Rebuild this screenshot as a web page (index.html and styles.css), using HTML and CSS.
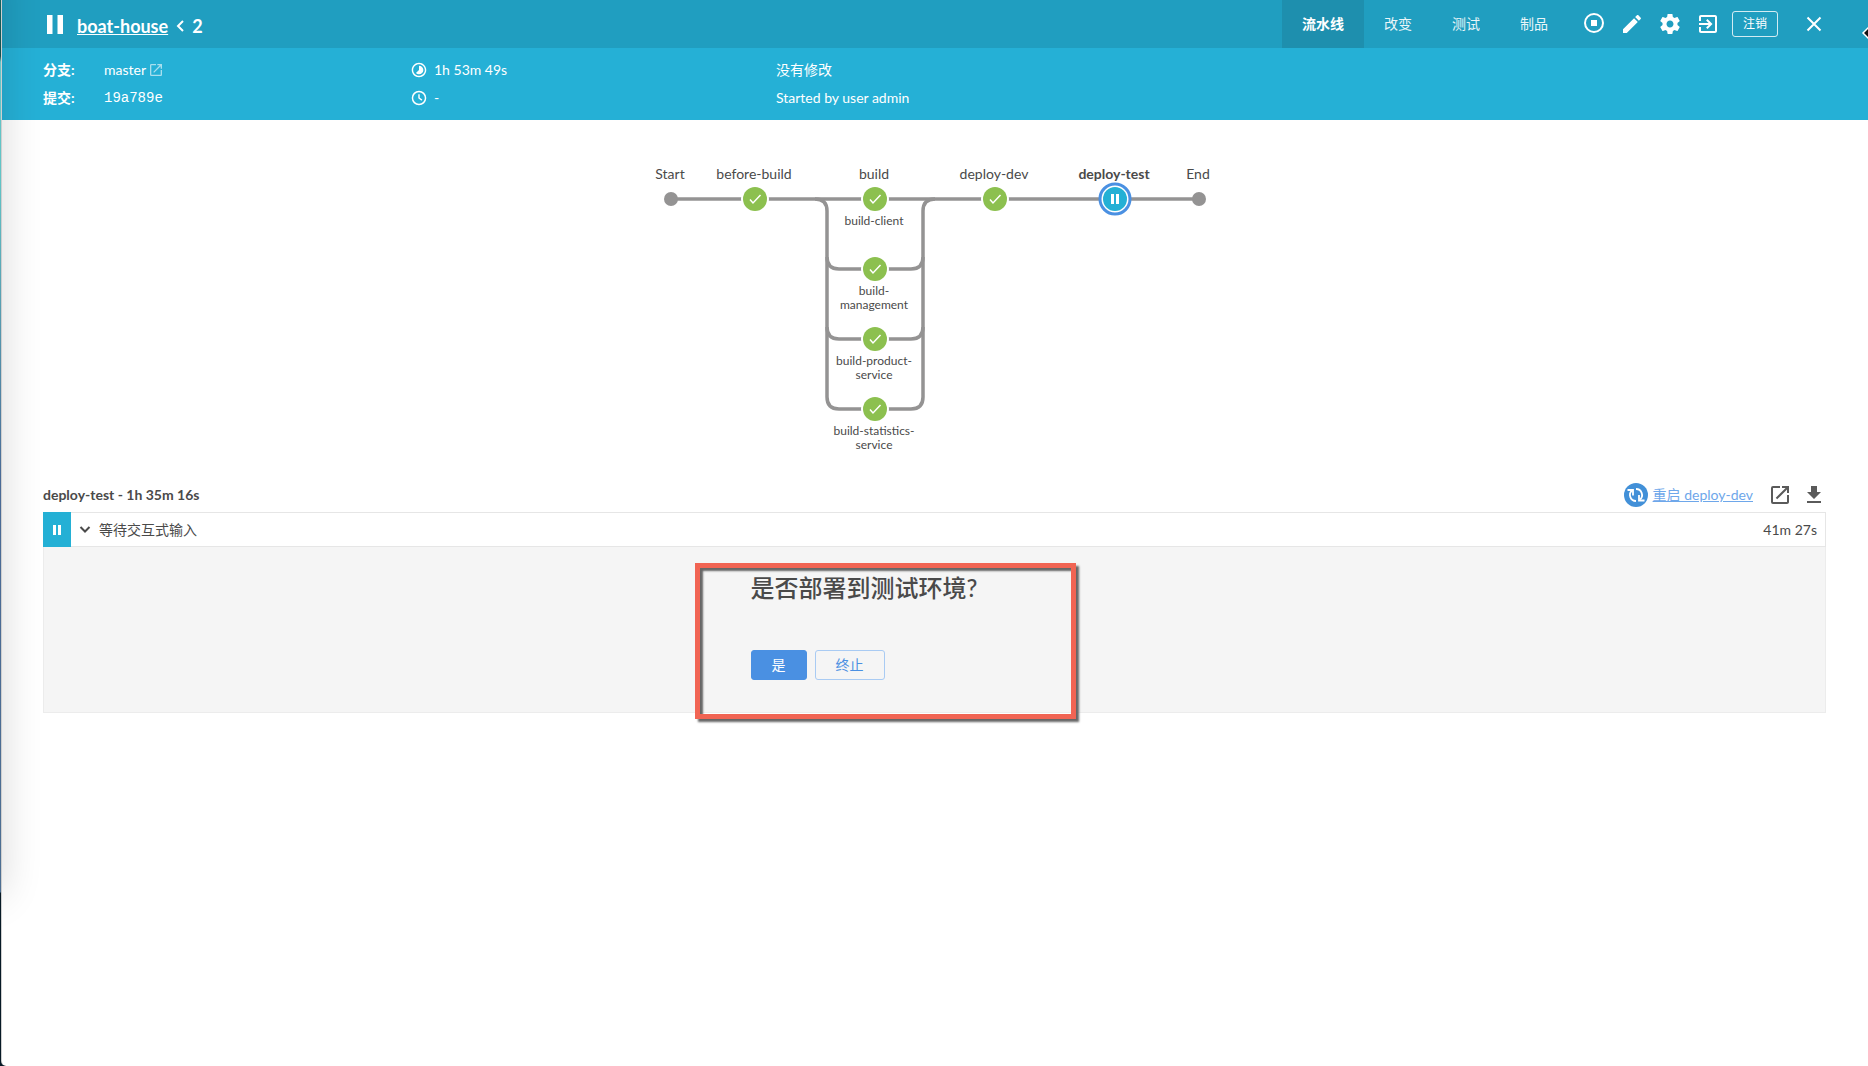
FILE: index.html
```html
<!DOCTYPE html>
<html lang="zh-CN">
<head>
<meta charset="utf-8">
<meta name="viewport" content="width=device-width, initial-scale=1">
<title>boat-house 2</title>
<link rel="stylesheet" href="styles.css">
</head>
<body>
<div class="backdrop">
<div class="modal">
  <header class="topbar">
    <svg class="state" width="24" height="24" viewBox="0 0 24 24" fill="currentColor"><path d="M4 3h5.500v19H4zM14.500 3h5.500v19h-5.500z"/></svg>
    <h1 class="title"><a href="#">boat-house</a>
      <svg width="8" height="12" viewBox="0 0 8 12" fill="none" stroke="currentColor" stroke-width="2"><path d="M7 1L2 6l5 5"/></svg>
      <span>2</span></h1>
    <nav class="tabs">
      <a class="tab tab-active" href="#">流水线</a>
      <a class="tab" href="#">改变</a>
      <a class="tab" href="#">测试</a>
      <a class="tab" href="#">制品</a>
    </nav>
    <div class="actions">
      <button class="icon-button" aria-label="停止"><svg width="24" height="24" viewBox="0 0 24 24" fill="none"><circle cx="12" cy="11" r="9" stroke="currentColor" stroke-width="2"/><path fill="currentColor" d="M9 8h6v6H9z"/></svg></button>
      <button class="icon-button" aria-label="编辑"><svg width="24" height="24" viewBox="0 0 24 24" fill="currentColor"><path d="M3 17.25V21h3.75L17.81 9.94l-3.75-3.75L3 17.25zM20.71 7.04c.39-.39.39-1.02 0-1.41l-2.34-2.34c-.39-.39-1.02-.39-1.41 0l-1.83 1.83 3.75 3.75 1.83-1.83z"/></svg></button>
      <button class="icon-button" aria-label="设置"><svg width="24" height="24" viewBox="0 0 24 24" fill="currentColor"><path d="M19.43 12.98c.04-.32.07-.64.07-.98s-.03-.66-.07-.98l2.11-1.65c.19-.15.24-.42.12-.64l-2-3.46c-.12-.22-.39-.3-.61-.22l-2.49 1c-.52-.4-1.08-.73-1.69-.98l-.38-2.65C14.46 2.18 14.25 2 14 2h-4c-.25 0-.46.18-.49.42l-.38 2.65c-.61.25-1.17.59-1.69.98l-2.49-1c-.23-.09-.49 0-.61.22l-2 3.46c-.13.22-.07.49.12.64l2.11 1.65c-.04.32-.07.65-.07.98s.03.66.07.98l-2.11 1.65c-.19.15-.24.42-.12.64l2 3.46c.12.22.39.3.61.22l2.49-1c.52.4 1.08.73 1.69.98l.38 2.65c.03.24.24.42.49.42h4c.25 0 .46-.18.49-.42l.38-2.65c.61-.25 1.17-.59 1.69-.98l2.49 1c.23.09.49 0 .61-.22l2-3.46c.12-.22.07-.49-.12-.64l-2.11-1.65zM12 15.500c-1.930 0-3.500-1.570-3.500-3.500s1.570-3.500 3.500-3.500 3.500 1.570 3.500 3.500-1.570 3.500-3.500 3.500z"/></svg></button>
      <button class="icon-button" aria-label="经典界面"><svg width="24" height="24" viewBox="0 0 24 24" fill="currentColor"><path d="M10.090 15.590L11.500 17l5-5-5-5-1.410 1.410L12.670 11H3v2h9.670l-2.580 2.590zM19 3H5c-1.110 0-2 .9-2 2v4h2V5h14v14H5v-4H3v4c0 1.100.89 2 2 2h14c1.100 0 2-.9 2-2V5c0-1.100-.9-2-2-2z"/></svg></button>
      <button class="logout">注销</button>
      <button class="icon-button close" aria-label="关闭"><svg width="24" height="24" viewBox="0 0 24 24" fill="none" stroke="currentColor" stroke-width="2"><path d="M5.500 5.500l13 13M18.500 5.500l-13 13"/></svg></button>
    </div>
  </header>
  <section class="summary">
    <dl class="facts">
      <dt>分支:</dt>
      <dd>master <a href="#" aria-label="打开分支"><svg class="faint" width="12" height="12" viewBox="3 3 18 18" fill="currentColor"><path d="M19 19H5V5h7V3H5a2 2 0 0 0-2 2v14a2 2 0 0 0 2 2h14c1.100 0 2-.9 2-2v-7h-2v7zM14 3v2h3.590l-9.830 9.830 1.410 1.410L19 6.410V10h2V3h-7z"/></svg></a></dd>
      <dt>提交:</dt>
      <dd class="commit">19a789e</dd>
    </dl>
    <ul class="times">
      <li><svg width="16" height="16" viewBox="1 1 22 22" fill="currentColor"><path d="M16.240 7.750A5.974 5.974 0 0 0 12 5.990v6l-4.240 4.240a6 6 0 0 0 8.490-.01 5.990 5.990 0 0 0-.01-8.480zM12 1.990c-5.520 0-10 4.480-10 10s4.480 10 10 10 10-4.480 10-10-4.480-10-10-10zm0 18c-4.420 0-8-3.580-8-8s3.580-8 8-8 8 3.580 8 8-3.580 8-8 8z"/></svg>1h 53m 49s</li>
      <li><svg width="16" height="16" viewBox="1 1 22 22" fill="none" stroke="currentColor" stroke-width="2"><circle cx="12" cy="12" r="9"/><path d="M12 7v5l4 3"/></svg>-</li>
    </ul>
    <ul class="cause">
      <li>没有修改</li>
      <li>Started by user admin</li>
    </ul>
  </section>
  <main class="content">
    <svg class="graph" width="588" height="320" viewBox="0 0 588 320" role="img" aria-label="流水线">
      <defs><g id="ok"><circle r="14" fill="#fff"/><circle r="12" fill="#8cc04f"/><path d="M-5 0.500L-2 4L5.500-4" fill="none" stroke="#fff" stroke-width="1.500"/></g></defs>
      <g fill="none" stroke="#949393" stroke-width="3.500">
        <path d="M30 49H558"/>
        <path d="M174 49Q186 49 186 61V247Q186 259 198 259H270Q282 259 282 247V61Q282 49 294 49"/>
        <path d="M186 107Q186 119 198 119H270Q282 119 282 107M186 177Q186 189 198 189H270Q282 189 282 177"/>
      </g>
      <g fill="#949393"><circle cx="30" cy="49" r="7"/><circle cx="558" cy="49" r="7"/></g>
      <use href="#ok" x="114" y="49"/><use href="#ok" x="234" y="49"/><use href="#ok" x="234" y="119"/><use href="#ok" x="234" y="189"/><use href="#ok" x="234" y="259"/><use href="#ok" x="354" y="49"/>
      <circle cx="474" cy="49" r="15" fill="#fff" stroke="#4a90e2" stroke-width="3"/>
      <circle cx="474" cy="49" r="12" fill="#24b0d5"/>
      <path d="M470 44h3v10h-3zM475 44h3v10h-3z" fill="#fff"/>
      <g class="stage">
        <text x="29" y="29">Start</text><text x="113" y="29">before-build</text><text x="233" y="29">build</text><text x="353" y="29">deploy-dev</text><text class="selected" x="473" y="29">deploy-test</text><text x="557" y="29">End</text>
      </g>
      <g class="branch">
        <text x="233" y="75">build-client</text>
        <text x="233" y="145">build-<tspan x="233" dy="14">management</tspan></text>
        <text x="233" y="215">build-product-<tspan x="233" dy="14">service</tspan></text>
        <text x="233" y="285">build-statistics-<tspan x="233" dy="14">service</tspan></text>
      </g>
    </svg>
    <div class="stage-bar">
      <h2>deploy-test - 1h 35m 16s</h2>
      <a class="restart" href="#"><svg width="24" height="24" viewBox="0 0 24 24"><circle cx="12" cy="12" r="12" fill="#4290d8"/><g fill="none" stroke="#fff" stroke-width="1.800"><path d="M8 7.500A6 6 0 0 0 12 18M12 6A6 6 0 0 1 16 16.500"/><path d="M3.500 7H9v5.500M20.500 17.500H15V12"/></g></svg><span>重启 deploy-dev</span></a>
      <a class="tool" href="#" aria-label="在新窗口打开"><svg width="24" height="24" viewBox="0 0 24 24" fill="currentColor"><path d="M19 19H5V5h7V3H5a2 2 0 0 0-2 2v14a2 2 0 0 0 2 2h14c1.100 0 2-.9 2-2v-7h-2v7zM14 3v2h3.590l-9.830 9.830 1.410 1.410L19 6.410V10h2V3h-7z"/></svg></a>
      <a class="tool" href="#" aria-label="下载"><svg width="24" height="24" viewBox="0 0 24 24" fill="currentColor"><path d="M19 9h-4V3H9v6H5l7 7 7-7zM5 18v2h14v-2H5z"/></svg></a>
    </div>
    <section class="step">
      <div class="step-row">
        <span class="step-state"><svg width="10" height="10" viewBox="0 0 10 10" fill="currentColor"><path d="M1 0h3v10H1zM6 0h3v10H6z"/></svg></span>
        <button class="step-toggle"><svg width="12" height="8" viewBox="0 0 12 8" fill="none" stroke="currentColor" stroke-width="2"><path d="M1.500 1L6 5.500 10.500 1"/></svg>等待交互式输入</button>
        <span class="step-time">41m 27s</span>
      </div>
      <div class="step-body">
        <form class="prompt">
          <h3>是否部署到测试环境?</h3>
          <div class="prompt-buttons"><button class="button primary" type="button">是</button><button class="button secondary" type="button">终止</button></div>
          <div class="highlight"></div>
        </form>
      </div>
    </section>
  </main>
  <div class="edge-shade"></div>
  <svg class="pointer" width="7" height="14" viewBox="0 0 7 14"><path d="M8 1L2 7L8 13" fill="#111" stroke="#fff" stroke-width="1.500"/></svg>
</div>
</div>
</body>
</html>
```
FILE: styles.css
```css
* { box-sizing: border-box; }
body {
  margin: 0;
  color: #4a4a4a;
  font: 14px/20px Lato, "Noto Sans CJK SC", sans-serif;
}
h1, h2, h3, dl, dd, ul { margin: 0; padding: 0; }
ul { list-style: none; }
a { color: inherit; }
svg { display: block; flex: none; }
button { font: inherit; color: inherit; background: none; border: 0; padding: 0; cursor: pointer; }

.backdrop {
  min-height: 100vh;
  padding-left: 1px;
  display: flex;
  background: linear-gradient(#14635f 0, #14504f 56px, #62c4c6 62px, #62c4c6 180px, #4a6a96 480px, #4d6f92 892px, #071a26 893px);
}
.modal {
  position: relative;
  flex: 1;
  min-width: 0;
  overflow: hidden;
  background: #fff;
  border-left: 1px solid rgba(160, 160, 160, .5);
  border-bottom-left-radius: 5px;
}

.topbar {
  display: flex;
  align-items: center;
  height: 48px;
  padding: 0 42px 0 41px;
  color: #fff;
  background: #209ec0;
}
.title {
  display: flex;
  align-items: center;
  gap: 8px;
  margin-left: 10px;
  padding-top: 4px;
  font-size: 18px;
  line-height: 24px;
  font-weight: 700;
}
.tabs { display: flex; margin-left: auto; }
.tab {
  padding: 0 20px;
  line-height: 48px;
  text-decoration: none;
  opacity: .9;
}
.tab-active { background: #1e8fae; font-weight: 700; opacity: 1; }
.actions { display: flex; align-items: center; gap: 14px; margin-left: 14px; }
.logout {
  height: 26px;
  padding: 0 10px;
  border: 1px solid rgba(255, 255, 255, .8);
  border-radius: 3px;
  font-size: 12px;
  line-height: 24px;
  margin-left: -2px;
}
.close { margin-left: 10px; }

.summary {
  display: grid;
  grid-template-columns: 368fr 365fr 1050fr;
  padding: 8px 42px 8px 41px;
  color: #fff;
  background: #25b0d6;
  line-height: 28px;
}
.facts { display: grid; grid-template-columns: 61px 1fr; }
.facts dt { font-weight: 700; }
.facts dd, .times li { display: flex; align-items: center; }
.facts dd { gap: 4px; }
.facts .commit { font-family: "Liberation Mono", monospace; }
.faint { opacity: .6; }
.times li { gap: 7px; }

.content { padding: 30px 42px 40px 41px; }
.graph { margin: 0 auto; }
.graph text { fill: #4a4a4a; text-anchor: middle; }
.stage text { font-size: 14px; }
.stage .selected { font-weight: 700; }
.branch text { font-size: 12px; }

.stage-bar { display: flex; align-items: center; height: 42px; padding-top: 8px; }
.stage-bar h2 { margin-right: auto; font-size: 14px; font-weight: 700; }
.restart { display: flex; align-items: center; gap: 5px; margin-right: 15px; color: #6ea7ea; }
.tool { color: #5a5a5a; }
.tool + .tool { margin-left: 10px; }

.step-row {
  display: flex;
  align-items: stretch;
  height: 35px;
  padding-right: 8px;
  border: 1px solid #e6e6e6;
  border-left: 0;
}
.step-state {
  display: grid;
  place-items: center;
  width: 28px;
  margin: -1px 0;
  color: #fff;
  background: #24b0d5;
}
.step-toggle { display: flex; align-items: center; gap: 8px; margin-left: 8px; }
.step-time { margin-left: auto; line-height: 33px; }
.step-body { padding: 26px 0 32px; background: #f5f5f5; border: 1px solid #ececec; border-top: 0; }
.prompt { position: relative; width: 368px; margin: 0 auto; }
.prompt h3 { font-size: 24px; line-height: 30px; font-weight: 500; }
.prompt-buttons { display: flex; gap: 8px; padding-top: 47px; }
.button { height: 30px; padding: 0 20px; border: 1px solid #a9cbf3; border-radius: 3px; line-height: 28px; }
.primary { color: #fff; background: #4a90e2; border-color: #4a90e2; }
.secondary { color: #4a90e2; }
.highlight {
  position: absolute;
  inset: -10px 43px -39px -56px;
  border: 5px solid #f16453;
  box-shadow: 3px 3px 2px #666, inset 3px 3px 2px #666;
  pointer-events: none;
}

.edge-shade {
  position: absolute;
  top: -40px;
  left: -40px;
  width: 40px;
  height: 934px;
  box-shadow: 0 0 40px rgba(0, 0, 0, .16);
  pointer-events: none;
}
.pointer { position: absolute; top: 26px; right: 0; }
```
